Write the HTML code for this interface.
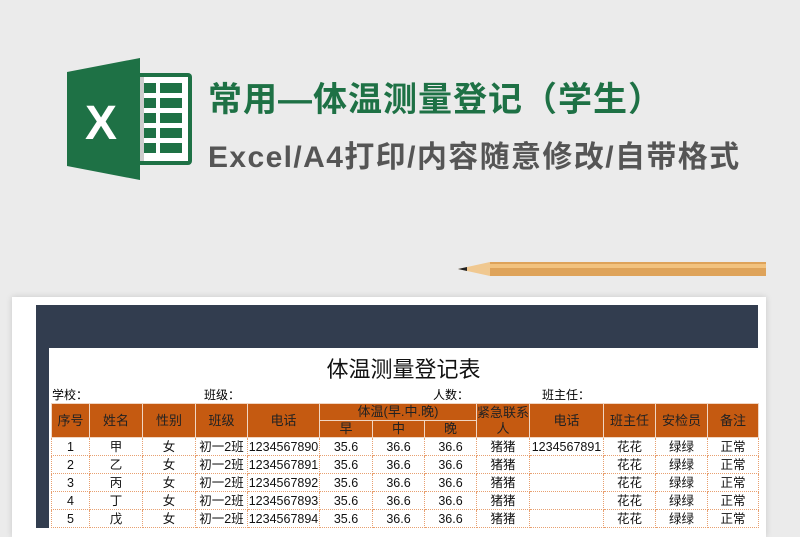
<!DOCTYPE html>
<html><head><meta charset="utf-8"><style>
body{margin:0;width:800px;height:526px;overflow:hidden;background:#ebebeb;position:relative;font-family:"Liberation Sans","Noto Sans CJK SC",sans-serif}
.abs{position:absolute}
table{border-collapse:collapse;table-layout:fixed;position:absolute;left:51px;top:403px;width:707px;font-size:12.5px}
td{text-align:center;padding:0;white-space:nowrap;overflow:visible}
.h td{background:#c55a11;color:#222;border:1px solid #f1d6c3;font-size:13px;line-height:16px;overflow:hidden}
.d td{height:17px;line-height:16px;border:1px dotted #e8a070;color:#111}
</style></head><body>
<svg class="abs" style="left:60px;top:55px" width="140" height="130" viewBox="60 55 140 130">
<rect x="122" y="73" width="70" height="92" rx="4" fill="#1e7145"/>
<rect x="126" y="77" width="62" height="84" fill="#fff"/>
<rect x="136" y="77" width="8" height="84" fill="#ccc"/>
<g fill="#1e7145">
<rect x="144" y="83" width="12" height="10"/><rect x="160" y="83" width="22" height="10"/>
<rect x="144" y="98" width="12" height="10"/><rect x="160" y="98" width="22" height="10"/>
<rect x="144" y="113" width="12" height="10"/><rect x="160" y="113" width="22" height="10"/>
<rect x="144" y="128" width="12" height="10"/><rect x="160" y="128" width="22" height="10"/>
<rect x="144" y="143" width="12" height="10"/><rect x="160" y="143" width="22" height="10"/>
</g>
<path d="M67 72 L140 58 L140 180 L67 166 Z" fill="#1e7145"/>
<text x="101" y="139" font-family="Liberation Sans" font-weight="bold" font-size="48" fill="#fff" text-anchor="middle">X</text>
</svg>
<div class="abs" style="left:208px;top:72px;font-size:34px;font-weight:bold;color:#1e7145;letter-spacing:1px;white-space:nowrap">常用—体温测量登记（学生）</div>
<div class="abs" style="left:208px;top:132px;font-size:30px;font-weight:bold;color:#555;letter-spacing:1.4px;white-space:nowrap">Excel/A4打印/内容随意修改/自带格式</div>
<svg class="abs" style="left:455px;top:258px" width="315" height="24">
<polygon points="3,11 35,4 35,18" fill="#f0c890"/>
<polygon points="3,11 12,9 12,13" fill="#222"/>
<rect x="35" y="4" width="276" height="14" fill="#dea35a"/>
<rect x="35" y="6" width="276" height="4" fill="#f2c27e"/>
</svg>
<div class="abs" style="left:12px;top:297px;width:754px;height:240px;background:#fff;box-shadow:0 0 6px rgba(0,0,0,.15)"></div>
<div class="abs" style="left:36px;top:305px;width:722px;height:43px;background:#323d4f"></div>
<div class="abs" style="left:36px;top:348px;width:13px;height:180px;background:#323d4f"></div>
<div class="abs" style="left:49px;top:352px;width:709px;text-align:center;font-size:22px;color:#111">体温测量登记表</div>
<div class="abs" style="left:52px;top:386px;font-size:12px">学校：</div>
<div class="abs" style="left:204px;top:386px;font-size:12px">班级：</div>
<div class="abs" style="left:433px;top:386px;font-size:12px">人数：</div>
<div class="abs" style="left:542px;top:386px;font-size:12px">班主任：</div>
<table>
<colgroup><col style="width:38px"><col style="width:53px"><col style="width:53px"><col style="width:52px"><col style="width:72px"><col style="width:53px"><col style="width:52px"><col style="width:52px"><col style="width:53px"><col style="width:74px"><col style="width:52px"><col style="width:52px"><col style="width:51px"></colgroup>
<tr class="h" style="height:17px"><td rowspan="2">序号</td><td rowspan="2">姓名</td><td rowspan="2">性别</td><td rowspan="2">班级</td><td rowspan="2">电话</td><td colspan="3">体温(早.中.晚)</td><td rowspan="2" style="white-space:normal">紧急联系人</td><td rowspan="2">电话</td><td rowspan="2">班主任</td><td rowspan="2">安检员</td><td rowspan="2">备注</td></tr>
<tr class="h" style="height:17px"><td>早</td><td>中</td><td>晚</td></tr>
<tr class="d"><td>1</td><td>甲</td><td>女</td><td>初一2班</td><td>1234567890</td><td>35.6</td><td>36.6</td><td>36.6</td><td>猪猪</td><td>1234567891</td><td>花花</td><td>绿绿</td><td>正常</td></tr>
<tr class="d"><td>2</td><td>乙</td><td>女</td><td>初一2班</td><td>1234567891</td><td>35.6</td><td>36.6</td><td>36.6</td><td>猪猪</td><td></td><td>花花</td><td>绿绿</td><td>正常</td></tr>
<tr class="d"><td>3</td><td>丙</td><td>女</td><td>初一2班</td><td>1234567892</td><td>35.6</td><td>36.6</td><td>36.6</td><td>猪猪</td><td></td><td>花花</td><td>绿绿</td><td>正常</td></tr>
<tr class="d"><td>4</td><td>丁</td><td>女</td><td>初一2班</td><td>1234567893</td><td>35.6</td><td>36.6</td><td>36.6</td><td>猪猪</td><td></td><td>花花</td><td>绿绿</td><td>正常</td></tr>
<tr class="d"><td>5</td><td>戊</td><td>女</td><td>初一2班</td><td>1234567894</td><td>35.6</td><td>36.6</td><td>36.6</td><td>猪猪</td><td></td><td>花花</td><td>绿绿</td><td>正常</td></tr>
</table>
</body></html>
